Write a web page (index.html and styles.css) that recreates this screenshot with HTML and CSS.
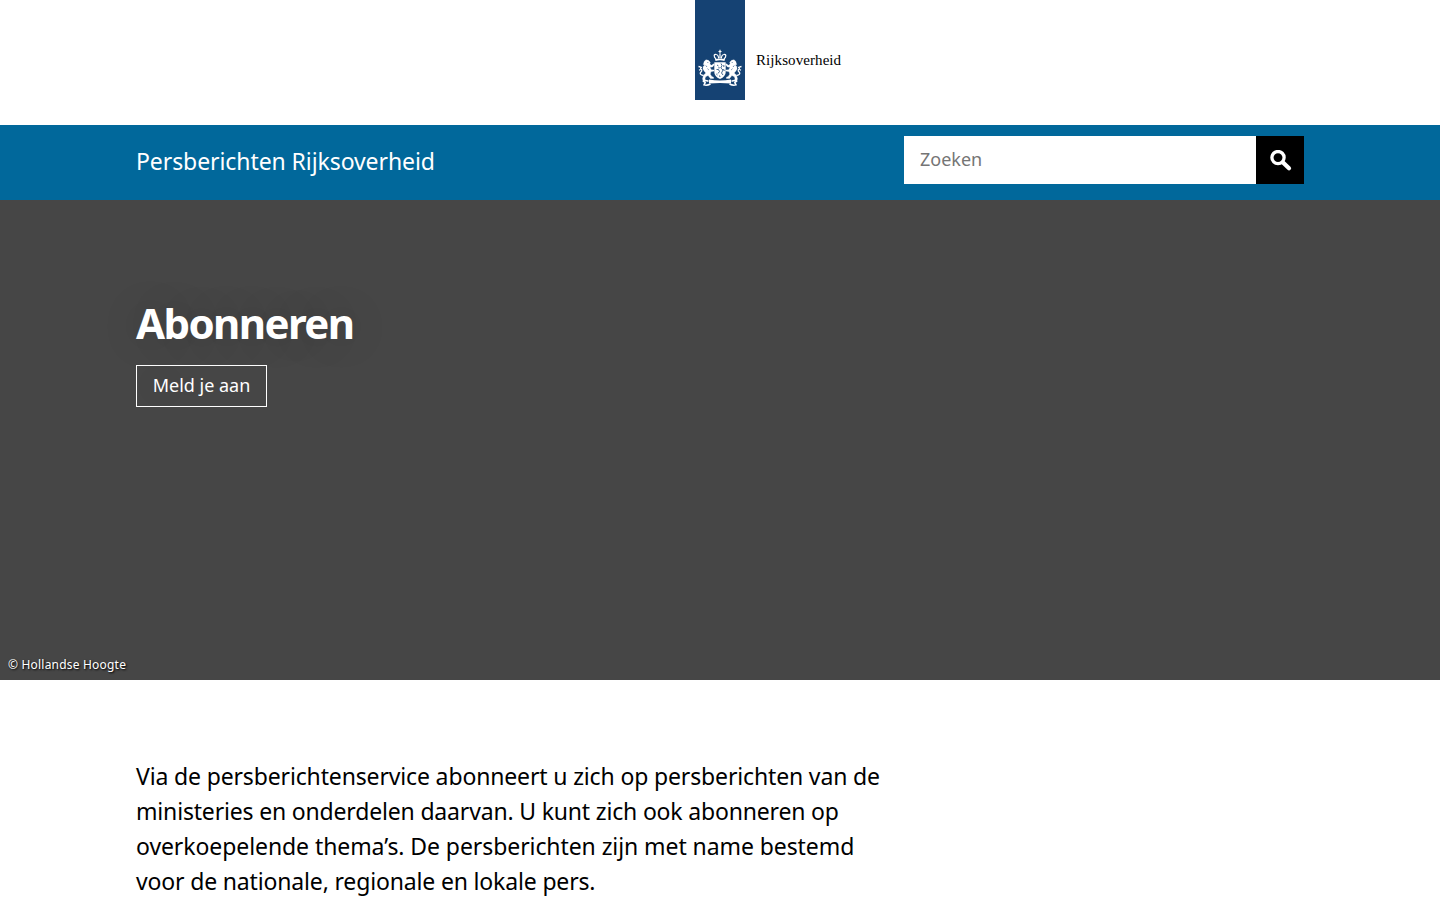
FILE: index.html
```html
<!DOCTYPE html>
<html lang="nl">
<head>
<meta charset="utf-8">
<title>Abonneren | Persberichten Rijksoverheid</title>
<link rel="stylesheet" href="styles.css">
</head>
<body>
<header class="logo-bar">
  <a class="logo">
    <svg class="logo-mark" width="50" height="100" viewBox="0 0 50 100" aria-hidden="true">
      <rect width="50" height="100" fill="#154273"/>
      <!-- crown -->
      <g fill="none" stroke="#fff" stroke-width="1.200">
        <path d="M25 49.800v4M23.500 51.500h3"/>
        <path d="M21 59c-2.700-2.500-2.200-5 .2-4.500 1.700.2 2.300 1.700 2.500 4M29 59c2.700-2.500 2.200-5-.2-4.500-1.700.2-2.300 1.700-2.500 4M25 54v4"/>
        <path d="M20.300 60q4.700-1.300 9.400 0" stroke-width="1.900"/>
      </g>
      <!-- shield -->
      <path d="M19.300 62.300h11.400v9.700q0 4.700-5.700 7-5.700-2.300-5.700-7z" fill="#fff"/>
      <path d="M22 65l1.500 1M21.500 69.500h2l1 2-1.500 2M26 63.500l1 2-1.200 2.500 2.200 2-1.500 3 1.500 2M28.800 65v2M28.500 69l.8 2M21.300 74l1.200 1M24.500 75.500l.5 1.500M24 67v1.500" fill="none" stroke="#154273" stroke-width=".8"/>
      <!-- lion supporters -->
      <g id="supporter">
        <path d="M9.300 61.300l1.700-1.500 2.400.5 1.900 2-.5 1.800 1.700 1.200 2.200-1.600.7 1-1.900 2.300-2.500.3 1.300 2.400 2.700.2.200 1.200-3.300.6-.6 2.500 1.500 2.200 1.800.8v1.300h-3.200l-2.300-3-2.500 1.200-.7 2.500 1.200 1.200-.4.900H8.200l-.7-2.500 1-3.500 2.300-2.400-1.500-1.700-1.400-2.200.3-2.400 1.500-1.500-1.400-.5z" fill="#fff" stroke="#fff" stroke-width=".3"/>
        <path d="M10.800 65.500l1.200 1.500M12.500 68.700l1.300 1.200M12.300 62.500h1" fill="none" stroke="#154273" stroke-width=".6"/>
        <path d="M8.500 75.500c-3-.5-4.200-2-2.600-3.500 1.700-1.600.9-3-.9-3.300M3.500 66.500l3.500.8M5.500 69.500l-1.500.8M4.700 66.300l1.500 1.800" fill="none" stroke="#fff" stroke-width="1.300"/>
      </g>
      <use href="#supporter" transform="translate(50 0) scale(-1 1)"/>
      <!-- motto ribbon -->
      <path d="M14 79.500q11 1.900 22 0v4q-11-1.200-22 0z" fill="#fff"/>
      <path d="M13.500 81.200q-3.500-1.200-5 0l1.700 1.500-1.200 2.200q3 .9 6.500-.9M36.500 81.200q3.500-1.200 5 0l-1.700 1.500 1.200 2.200q-3 .9-6.500-.9" fill="none" stroke="#fff" stroke-width="1.500"/>
    </svg>
    <span class="logo-name">Rijksoverheid</span>
  </a>
</header>
<div class="title-bar">
  <div class="container title-row">
    <p class="site-title">Persberichten Rijksoverheid</p>
    <form class="search">
      <input class="search-input" type="text" placeholder="Zoeken" aria-label="Zoeken">
      <button class="search-button" type="button" aria-label="Start zoeken">
        <svg width="22" height="22" viewBox="0 0 22 22" fill="none" stroke="#fff"><circle cx="8" cy="7.600" r="6.100" stroke-width="3.300"/><path d="M13 12.500l6 5.800" stroke-width="4.200" stroke-linecap="round"/></svg>
      </button>
    </form>
  </div>
</div>
<section class="hero">
  <div class="container hero-content">
    <h1 class="hero-title">Abonneren</h1>
    <a class="hero-button">Meld je aan</a>
  </div>
  <p class="credit">© Hollandse Hoogte</p>
</section>
<main class="container">
  <p class="intro">
    <span class="line line-1">Via de persberichtenservice abonneert u zich op persberichten van de</span>
    <span class="line line-2">ministeries en onderdelen daarvan. U kunt zich ook abonneren op</span>
    <span class="line line-3">overkoepelende thema’s. De persberichten zijn met name bestemd</span>
    <span class="line line-4">voor de nationale, regionale en lokale pers.</span>
  </p>
</main>
</body>
</html>
```
FILE: styles.css
```css
* { box-sizing: border-box; }
html { overflow: hidden; }
body { margin: 0; height: 900px; overflow: hidden; background: #fff; color: #000; font-family: "Noto Sans", sans-serif; }
p, h1 { margin: 0; }
.container { width: 1168px; margin: 0 auto; }
.logo-bar { height: 125px; padding-left: 695px; }
.logo { display: flex; gap: 11px; }
.logo-mark { display: block; }
.logo-name { padding-top: 51px; font: 15px/18px "Liberation Serif", serif; letter-spacing: .08px; }
.title-bar { height: 75px; background: #01689b; }
.title-row { display: flex; justify-content: space-between; align-items: flex-start; padding-top: 11px; }
.site-title { padding-top: 8px; font-size: 23px; line-height: 34px; letter-spacing: -.08px; color: #fff; white-space: nowrap; }
.search { display: flex; width: 400px; height: 48px; }
.search-input { flex: 1; min-width: 0; border: 0; padding: 0 16px 2px; background: #fff; font: 18px "Noto Sans", sans-serif; }
.search-input::placeholder { color: #757575; }
.search-button { width: 48px; border: 0; padding: 2px 0 0 1px; background: #000; display: flex; align-items: center; justify-content: center; }
.hero { display: flex; flex-direction: column; justify-content: space-between; height: 480px; padding-top: 95px; background: #464646; color: #fff; }
.hero-content { text-shadow: 0 0 40px rgba(0, 0, 0, .2); }
.hero-title { font-size: 42px; line-height: 56px; font-weight: 700; letter-spacing: -1.6px; }
.hero-button { display: flex; align-items: center; justify-content: center; width: 131px; height: 42px; margin-top: 14px; padding-bottom: 2px; border: 1px solid #fff; font-size: 18px; white-space: nowrap; }
.credit { padding: 0 8px 6px; font-size: 12px; line-height: 19px; letter-spacing: .2px; text-shadow: 1px 1px 2px #000; }
.intro { padding-top: 79px; font-size: 23px; line-height: 35px; }
.line { display: table; white-space: nowrap; }
.line-1 { letter-spacing: -.147px; }
.line-2 { letter-spacing: -.175px; }
.line-3 { letter-spacing: -.08px; }
.line-4 { letter-spacing: -.16px; }
```
